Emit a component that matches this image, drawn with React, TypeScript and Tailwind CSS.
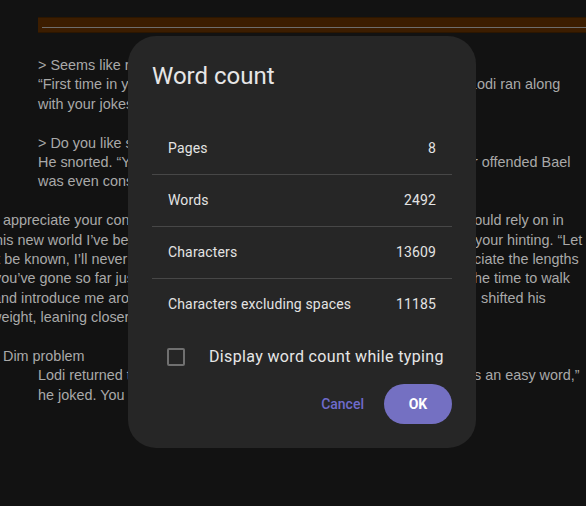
import React from "react";

interface DocLine {
  left: string;
  leftCls: string;
  right?: string;
  rightCls?: string;
}

// background document, partly hidden behind the dialog
const lines: (DocLine | null)[] = [
  { left: "> Seems like right now I’m the only one laughing here", leftCls: "ml-[38px]" },
  { left: "“First time in your life you made a joke?” Lodi ran along", leftCls: "ml-[38px]", right: "Lodi ran along", rightCls: "ml-[3px]" },
  { left: "with your jokes, that’s what I did.", leftCls: "ml-[38px]" },
  null,
  { left: "> Do you like saying such things?", leftCls: "ml-[38px]" },
  { left: "He snorted. “You know, it’s ever so strange,” their offended Bael", leftCls: "ml-[38px]", right: "r offended Bael", rightCls: "ml-[7px]" },
  { left: "was even considering it.", leftCls: "ml-[38px]" },
  null,
  { left: "I appreciate your concern, but I could rely on in", leftCls: "ml-[-5px]", right: "could rely on in", rightCls: "ml-px" },
  { left: "this new world I’ve been given, at your hinting. “Let", leftCls: "ml-[-9px]", right: "your hinting. “Let", rightCls: "ml-[9px]" },
  { left: "it be known, I’ll never fail to appreciate the lengths", leftCls: "ml-[-7px]", right: "ciate the lengths", rightCls: "ml-[8px]" },
  { left: "you’ve gone so far just to take the time to walk", leftCls: "ml-[-6px]", right: "the time to walk", rightCls: "ml-[4px]" },
  { left: "and introduce me around here.” He shifted his", leftCls: "ml-[-7px]", right: "shifted his", rightCls: "ml-[15px]" },
  { left: "weight, leaning closer to the fire.", leftCls: "ml-[-9px]" },
  null,
  { left: "Dim problem", leftCls: "ml-[3px]" },
  { left: "Lodi returned the grin. “Dim was an easy word,”", leftCls: "ml-[38px]", right: "s an easy word,”", rightCls: "ml-[8px]" },
  { left: "he joked. You would know.", leftCls: "ml-[38px]" },
];

const stats = [
  { label: "Pages", value: "8" },
  { label: "Words", value: "2492" },
  { label: "Characters", value: "13609" },
  { label: "Characters excluding spaces", value: "11185" },
];

export default function App() {
  return (
    <div className="relative w-[586px] h-[506px] overflow-hidden bg-[#121212]">
      {/* Document */}
      <div className="pt-[17px] font-['Liberation_Sans',Arial,sans-serif] text-[14.4px] leading-[19.4px] text-[#a9a9a9]">
        <div className="ml-[38px] h-[16px] bg-[#3c1d00] border-y border-[#2c1600] flex items-end pb-[4px]">
          <div className="ml-[4px] w-full h-px bg-[#6e6e6e]" />
        </div>
        <div className="h-[23px]" />
        {lines.map((l, i) =>
          l === null ? (
            <div key={i} className="h-[19.4px]" />
          ) : (
            <div key={i} className="flex h-[19.4px] whitespace-nowrap">
              <div className="w-[466px] shrink-0 overflow-hidden">
                <span className={`block ${l.leftCls}`}>{l.left}</span>
              </div>
              {l.right && <span className={l.rightCls}>{l.right}</span>}
            </div>
          )
        )}
      </div>

      {/* Word count dialog */}
      <div className="absolute left-[128px] top-[36px] w-[348px] h-[412px] rounded-[28px] bg-[#262626] px-6 font-['Roboto',sans-serif]">
        <h2 className="pt-[24px] text-[24px] leading-[32px] text-[#e6e6e6]">Word count</h2>
        <div className="mt-[30px]">
          {stats.map((s, i) => (
            <div
              key={s.label}
              className={`flex h-[52px] items-center justify-between px-4 text-[14px] tracking-[0.15px] text-[#e3e3e3] ${
                i > 0 ? "border-t border-[#474747]" : ""
              }`}
            >
              <span>{s.label}</span>
              <span>{s.value}</span>
            </div>
          ))}
        </div>
        <div className="flex h-[54px] items-center pl-[15px]">
          <div className="w-[18px] h-[18px] rounded-[2px] border-2 border-[#707070]" />
          <span className="ml-[24px] text-[16px] tracking-[0.35px] text-[#e6e6e6]">Display word count while typing</span>
        </div>
        <div className="flex items-center justify-end gap-2">
          <button className="h-10 px-3 text-[14px] font-medium text-[#6f6bcb]">Cancel</button>
          <button className="h-10 w-[68px] rounded-full bg-[#7470c2] text-[14px] font-bold text-white">OK</button>
        </div>
      </div>
    </div>
  );
}
